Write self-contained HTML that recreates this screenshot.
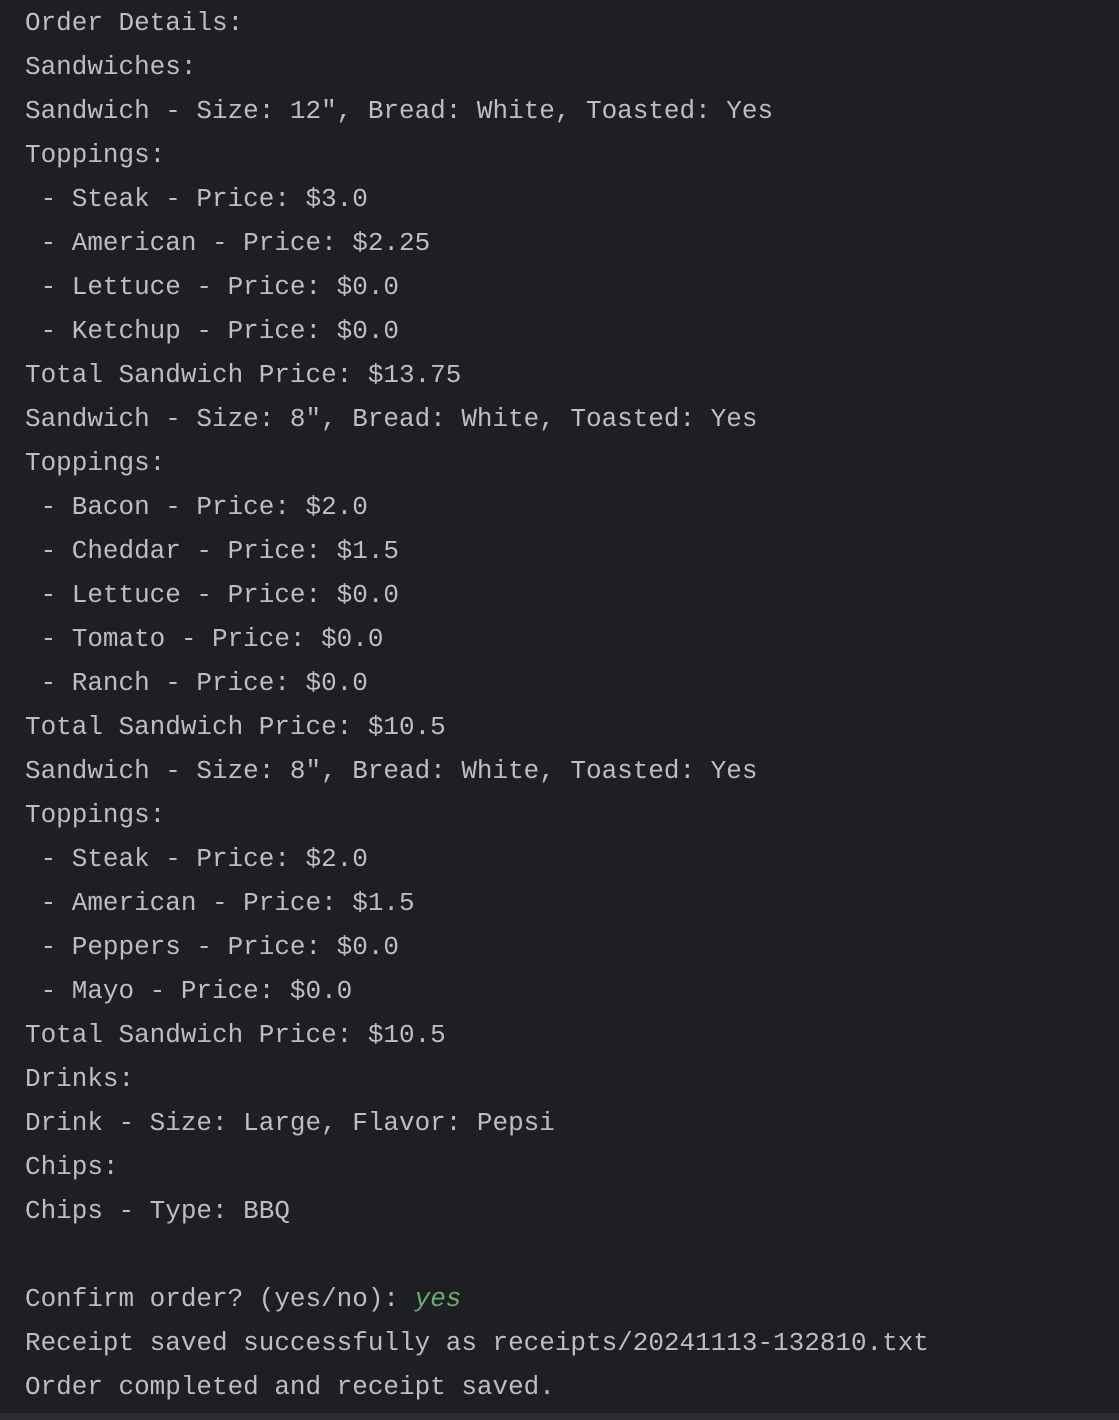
<!DOCTYPE html>
<html><head><meta charset="utf-8"><style>
html,body{margin:0;padding:0;}
body{width:1119px;height:1420px;background:#1e1f22;overflow:hidden;position:relative;}
pre{margin:0;position:absolute;left:25px;top:1px;font-family:"Liberation Mono","DejaVu Sans Mono",monospace;font-size:25.98px;line-height:44px;color:#bcbec4;}
.y{color:#6aab73;font-style:italic;}
.bar{position:absolute;left:0;right:0;top:1413px;height:7px;background:#2b2d30;}
</style></head><body>
<pre>Order Details:
Sandwiches:
Sandwich - Size: 12", Bread: White, Toasted: Yes
Toppings:
 - Steak - Price: $3.0
 - American - Price: $2.25
 - Lettuce - Price: $0.0
 - Ketchup - Price: $0.0
Total Sandwich Price: $13.75
Sandwich - Size: 8", Bread: White, Toasted: Yes
Toppings:
 - Bacon - Price: $2.0
 - Cheddar - Price: $1.5
 - Lettuce - Price: $0.0
 - Tomato - Price: $0.0
 - Ranch - Price: $0.0
Total Sandwich Price: $10.5
Sandwich - Size: 8", Bread: White, Toasted: Yes
Toppings:
 - Steak - Price: $2.0
 - American - Price: $1.5
 - Peppers - Price: $0.0
 - Mayo - Price: $0.0
Total Sandwich Price: $10.5
Drinks:
Drink - Size: Large, Flavor: Pepsi
Chips:
Chips - Type: BBQ

Confirm order? (yes/no): <span class="y">yes</span>
Receipt saved successfully as receipts/20241113-132810.txt
Order completed and receipt saved.</pre>
<div class="bar"></div>
</body></html>
